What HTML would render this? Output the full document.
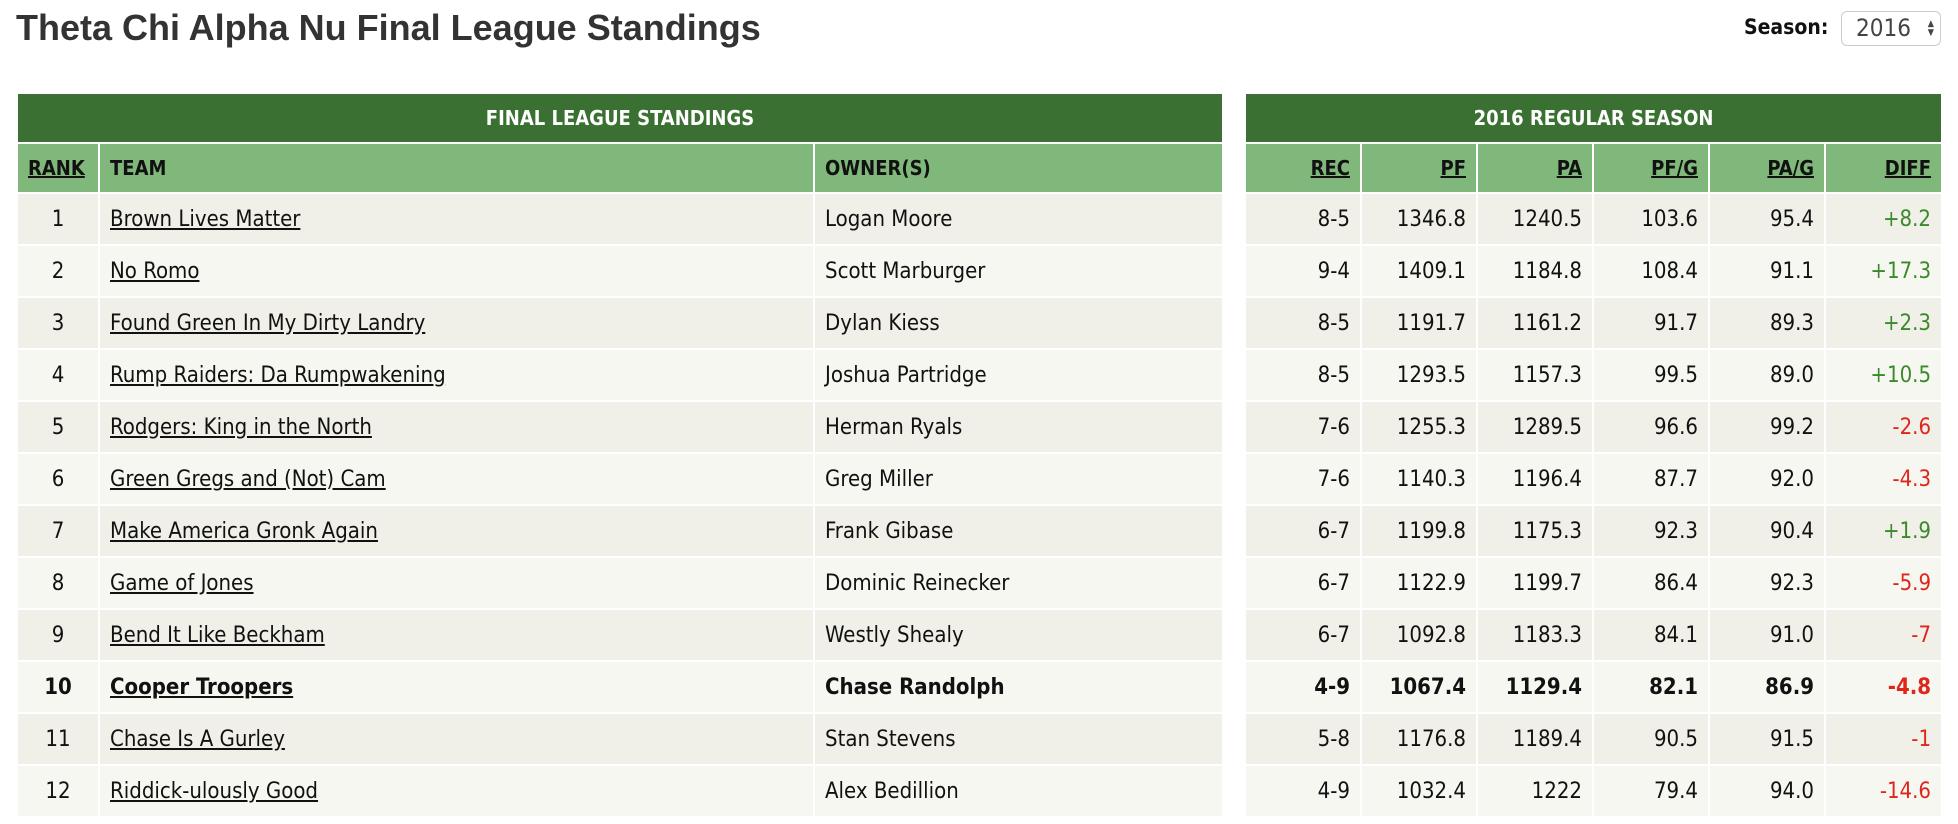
<!DOCTYPE html>
<html><head><meta charset="utf-8"><style>
html,body{margin:0;padding:0;background:#fff;width:1958px;height:824px;overflow:hidden}
body{position:relative;font-family:"DejaVu Sans Condensed","DejaVu Sans",sans-serif;color:#111}
h1{position:absolute;left:16px;top:7px;margin:0;font-family:"Liberation Sans",Arial,sans-serif;font-weight:bold;font-size:36px;color:#333;letter-spacing:0}
.season{position:absolute;left:1744px;top:15px;font-weight:bold;font-size:21px;color:#111}
.sel{position:absolute;left:1841px;top:11px;width:100px;height:35px;border:1px solid #ccc;border-radius:6px;font-size:24px;color:#444;box-sizing:border-box;padding:2px 0 0 14px}
.sel .ar{position:absolute;right:6px;top:8px;font-size:9px;line-height:9px;color:#444}
table{position:absolute;top:92px;border-collapse:collapse;table-layout:fixed;font-size:22px}
td,th{border:2.5px solid #fff;padding:0 10px;white-space:nowrap;overflow:hidden}
th{font-weight:bold;font-size:20px}
tr.h1 th{background:#3a7032;color:#fff;height:48px;text-align:center}
tr.h2 th{background:#80b77a;color:#111;height:48px;text-align:left}
tbody tr{height:52px}
tbody tr:nth-child(odd) td{background:#f0f0e8}
tbody tr:nth-child(even) td{background:#f6f7f1}
tbody td a{color:#111;text-decoration:underline}
.c{text-align:center}.r{text-align:right}
#L{left:16px;width:1206px}
#R{left:1244px;width:697px}
#R th,#R td{text-align:right}
#R tr.h1 th{text-align:center}
tr.b td{font-weight:bold}
.g{color:#3a8a2a}.n{color:#e0261b}
</style></head><body>
<h1>Theta Chi Alpha Nu Final League Standings</h1>
<div class="season">Season:</div>
<div class="sel">2016<span class="ar">▲<br>▼</span></div>

<table id="L">
<colgroup><col style="width:82px"><col style="width:715px"><col style="width:409px"></colgroup>
<thead>
<tr class="h1"><th colspan="3">FINAL LEAGUE STANDINGS</th></tr>
<tr class="h2"><th class="c"><u>RANK</u></th><th>TEAM</th><th>OWNER(S)</th></tr>
</thead>
<tbody>
<tr><td class="c">1</td><td><a>Brown Lives Matter</a></td><td>Logan Moore</td></tr>
<tr><td class="c">2</td><td><a>No Romo</a></td><td>Scott Marburger</td></tr>
<tr><td class="c">3</td><td><a>Found Green In My Dirty Landry</a></td><td>Dylan Kiess</td></tr>
<tr><td class="c">4</td><td><a>Rump Raiders: Da Rumpwakening</a></td><td>Joshua Partridge</td></tr>
<tr><td class="c">5</td><td><a>Rodgers: King in the North</a></td><td>Herman Ryals</td></tr>
<tr><td class="c">6</td><td><a>Green Gregs and (Not) Cam</a></td><td>Greg Miller</td></tr>
<tr><td class="c">7</td><td><a>Make America Gronk Again</a></td><td>Frank Gibase</td></tr>
<tr><td class="c">8</td><td><a>Game of Jones</a></td><td>Dominic Reinecker</td></tr>
<tr><td class="c">9</td><td><a>Bend It Like Beckham</a></td><td>Westly Shealy</td></tr>
<tr class="b"><td class="c">10</td><td><a>Cooper Troopers</a></td><td>Chase Randolph</td></tr>
<tr><td class="c">11</td><td><a>Chase Is A Gurley</a></td><td>Stan Stevens</td></tr>
<tr><td class="c">12</td><td><a>Riddick-ulously Good</a></td><td>Alex Bedillion</td></tr>
</tbody></table>

<table id="R">
<colgroup><col style="width:116px"><col style="width:116px"><col style="width:116px"><col style="width:116px"><col style="width:116px"><col style="width:117px"></colgroup>
<thead>
<tr class="h1"><th colspan="6">2016 REGULAR SEASON</th></tr>
<tr class="h2"><th><u>REC</u></th><th><u>PF</u></th><th><u>PA</u></th><th><u>PF/G</u></th><th><u>PA/G</u></th><th><u>DIFF</u></th></tr>
</thead>
<tbody>
<tr><td>8-5</td><td>1346.8</td><td>1240.5</td><td>103.6</td><td>95.4</td><td class="g">+8.2</td></tr>
<tr><td>9-4</td><td>1409.1</td><td>1184.8</td><td>108.4</td><td>91.1</td><td class="g">+17.3</td></tr>
<tr><td>8-5</td><td>1191.7</td><td>1161.2</td><td>91.7</td><td>89.3</td><td class="g">+2.3</td></tr>
<tr><td>8-5</td><td>1293.5</td><td>1157.3</td><td>99.5</td><td>89.0</td><td class="g">+10.5</td></tr>
<tr><td>7-6</td><td>1255.3</td><td>1289.5</td><td>96.6</td><td>99.2</td><td class="n">-2.6</td></tr>
<tr><td>7-6</td><td>1140.3</td><td>1196.4</td><td>87.7</td><td>92.0</td><td class="n">-4.3</td></tr>
<tr><td>6-7</td><td>1199.8</td><td>1175.3</td><td>92.3</td><td>90.4</td><td class="g">+1.9</td></tr>
<tr><td>6-7</td><td>1122.9</td><td>1199.7</td><td>86.4</td><td>92.3</td><td class="n">-5.9</td></tr>
<tr><td>6-7</td><td>1092.8</td><td>1183.3</td><td>84.1</td><td>91.0</td><td class="n">-7</td></tr>
<tr class="b"><td>4-9</td><td>1067.4</td><td>1129.4</td><td>82.1</td><td>86.9</td><td class="n">-4.8</td></tr>
<tr><td>5-8</td><td>1176.8</td><td>1189.4</td><td>90.5</td><td>91.5</td><td class="n">-1</td></tr>
<tr><td>4-9</td><td>1032.4</td><td>1222</td><td>79.4</td><td>94.0</td><td class="n">-14.6</td></tr>
</tbody></table>
</body></html>
